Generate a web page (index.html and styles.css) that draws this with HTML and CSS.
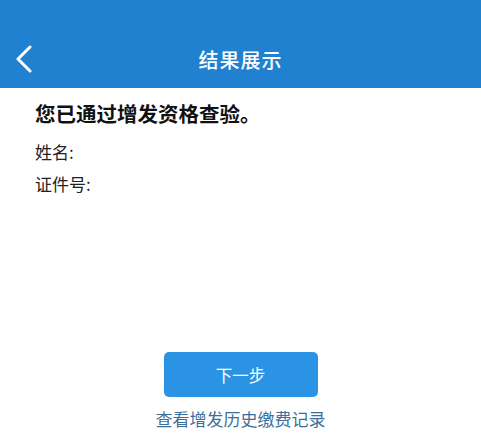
FILE: index.html
```html
<!DOCTYPE html>
<html lang="zh-CN">
<head>
<meta charset="UTF-8">
<meta name="viewport" content="width=device-width, initial-scale=1.0">
<title>结果展示</title>
<link rel="stylesheet" href="styles.css">
</head>
<body>

<div class="page">
  <!-- Top bar -->
  <div class="header">
    <div class="status-bar"></div>
    <div class="nav-bar">
      <span class="back">
        <svg width="18" height="28" viewBox="0 0 18 28">
          <polyline points="15,2 3,14 15,26" fill="none" stroke="#ffffff" stroke-width="3" stroke-linecap="round" stroke-linejoin="round"/>
        </svg>
      </span>
      <span class="nav-title">结果展示</span>
    </div>
  </div>

  <!-- Result -->
  <div class="content">
    <h2 class="result-title">您已通过增发资格查验。</h2>
    <div class="info-row">姓名:</div>
    <div class="info-row">证件号:</div>
  </div>

  <div class="actions">
    <button class="next-btn">下一步</button>
    <a href="#" class="history-link">查看增发历史缴费记录</a>
  </div>
</div>

</body>
</html>
```

FILE: styles.css
```css
/* Result page */
body {
  margin: 0;
  padding: 0;
  background-color: #ffffff;
  font-family: "Noto Sans CJK SC", "Noto Sans", sans-serif;
}

.page {
  width: 481px;
  height: 435px;
  display: flex;
  flex-direction: column;
}

.header {
  background-color: #1f81cf;
}

.status-bar {
  height: 30px;
}

.nav-bar {
  height: 58px;
  display: flex;
  align-items: center;
  justify-content: center;
  position: relative;
}

.back {
  position: absolute;
  left: 15px;
  top: 15px;
  display: flex;
}

.nav-title {
  color: #ffffff;
  font-size: 20px;
  font-weight: 500;
  letter-spacing: 1px;
}

.content {
  padding: 11px 35px 0;
  flex: 1;
}

.result-title {
  margin: 0 0 9px;
  font-size: 20.5px;
  font-weight: bold;
  color: #111111;
  line-height: 28px;
}

.info-row {
  font-size: 17px;
  color: #222222;
  line-height: 32px;
}

.actions {
  display: flex;
  flex-direction: column;
  align-items: center;
  padding-bottom: 4px;
}

.next-btn {
  width: 154px;
  height: 45px;
  border: none;
  border-radius: 5px;
  background-color: #2b93e3;
  color: #ffffff;
  font-family: inherit;
  font-size: 16.5px;
  cursor: pointer;
}

.history-link {
  margin-top: 10px;
  color: #3d6f9c;
  font-size: 17px;
  text-decoration: none;
  line-height: 24px;
}
```
